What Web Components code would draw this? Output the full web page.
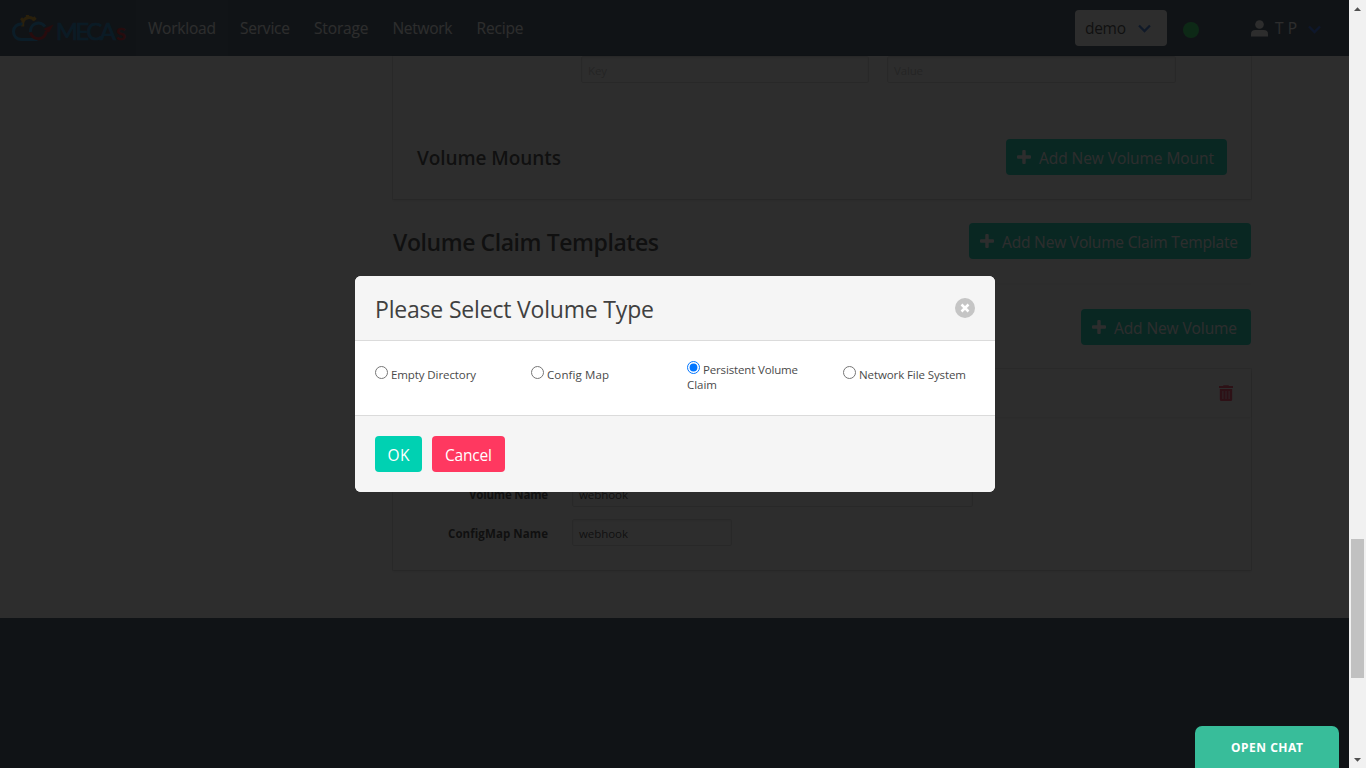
<!DOCTYPE html>
<html lang="en">
<head>
<meta charset="utf-8">
<title>Volumes</title>
<style>
html,body{margin:0;height:100%;overflow:hidden}
body{font-family:"Open Sans","Noto Sans",sans-serif;font-size:15.5px;color:#4a4a4a;background:#34495e}
</style>
</head>
<body>
<app-shell></app-shell>
<script>
const define=(name,html,setup)=>customElements.define(name,class extends HTMLElement{
  connectedCallback(){
    if(this.shadowRoot)return;
    const t=document.createElement('template');
    t.innerHTML=html;
    this.attachShadow({mode:'open'}).append(t.content.cloneNode(true));
    if(setup)setup(this,this.shadowRoot);
  }
});

/* One line of text, tracked so that it fills the width given in "w". */
define('fit-text',`<style>:host{display:inline-block;white-space:nowrap;line-height:inherit}</style><slot></slot>`,(el)=>{
  const track=()=>{
    const n=el.textContent.length,w=+el.getAttribute('w');
    el.style.letterSpacing='0px';
    const cur=el.getBoundingClientRect().width;
    if(!cur||!w)return;
    const s=(w-cur)/Math.max(1,n-1);
    el.style.letterSpacing=s+'px';
    el.style.marginRight=-s+'px';
  };
  requestAnimationFrame(track);
});

define('app-logo',`<style>:host{display:flex;align-items:center;box-sizing:border-box;width:136px;height:56px;padding-left:11px}svg{display:block;flex:none}
.name{font:400 23.5px/28px Lato,sans-serif;color:#0d7ec8;margin:6px 0 0 1px;-webkit-text-stroke:.7px #0d7ec8}
.s{font:400 23px/28px Lato,sans-serif;color:#d01420;margin:6px 0 0 0;-webkit-text-stroke:.7px #d01420}</style>
<svg width="44" height="56" viewBox="11 0 44 56" fill="none">
<path d="M22.700 26.500V23a6.500 6.500 0 0 1 11.800-2.500" stroke="#e8a010" stroke-width="3"/>
<path d="M21.200 20.500l2-2M27.500 17v-2M33.500 19.500l2-2" stroke="#e8a010" stroke-width="3.200"/>
<path d="M22.500 24c-5.500-.5-9 3.300-9 7.500 0 5 3.500 8 8 8h16" stroke="#1490d8" stroke-width="3"/>
<path d="M30.500 32a8 8 0 0 1 14.500-5.500" stroke="#1490d8" stroke-width="3"/>
<path d="M30.500 32.500a8 8 0 0 0 15.800-1.500" stroke="#d01420" stroke-width="3"/>
<path d="M43.500 29l10-4.500-4.500 8z" fill="#d01420"/>
</svg><fit-text class="name" w="60">MECA</fit-text><fit-text class="s" w="9">s</fit-text>`);

define('chevron-icon',`<style>:host{display:block;line-height:0}</style><svg width="13" height="9" viewBox="0 0 13 9" fill="none" stroke="currentColor" stroke-width="2.300"><path d="M1 1.500l5.500 5.500L12 1.500"/></svg>`);

define('nav-link',`<style>:host{display:flex;align-items:center;padding:0 12px;color:#fff;height:56px}:host([active]){background:#3b5065}</style><slot></slot>`);

define('top-nav',`<style>
:host{display:flex;height:56px;background:#34495e;color:#fff;align-items:center;flex:none}
.end{margin-left:auto;display:flex;align-items:center;height:56px}
.select{display:flex;box-sizing:border-box;width:92px;height:36px;background:#fff;border-radius:4px;align-items:center;justify-content:space-between;padding:0 16px 0 10px;color:#363636}
.select chevron-icon{color:#3273dc}
.dot{width:16px;height:16px;border-radius:50%;background:#22e05e;margin:4px 52px 0 16px}
.tp{margin-left:7px}
.end>.user-chevron{display:block;margin:3px 28px 0 11px;color:#2464f0;flex:none}
</style>
<app-logo></app-logo>
<nav-link active><fit-text w="68">Workload</fit-text></nav-link>
<nav-link><fit-text w="50">Service</fit-text></nav-link>
<nav-link><fit-text w="54.500">Storage</fit-text></nav-link>
<nav-link><fit-text w="60">Network</fit-text></nav-link>
<nav-link><fit-text w="47">Recipe</fit-text></nav-link>
<div class="end"><div class="select"><fit-text w="41">demo</fit-text><chevron-icon></chevron-icon></div>
<div class="dot"></div>
<svg width="17" height="17" viewBox="0 0 17 17" fill="#fff"><circle cx="8.500" cy="4.500" r="4.300"/><path d="M0 16.500v-2.300Q0 10 4.500 10h8q4.500 0 4.500 4.200v2.300z"/></svg>
<fit-text class="tp" w="22">T P</fit-text><chevron-icon class="user-chevron"></chevron-icon></div>`);

define('add-button',`<style>:host{display:flex;box-sizing:border-box;height:36px;align-items:center;gap:8px;padding:0 0 0 11px;background:#00d1b2;color:#fff;border-radius:4px;flex:none}svg{display:block}::slotted(*){padding-top:2px}</style>
<svg width="14" height="14" fill="#fff"><path d="M5.300 1q0-1 1-1h1.400q1 0 1 1v4.300H13q1 0 1 1v1.400q0 1-1 1H8.700V13q0 1-1 1H6.300q-1 0-1-1V8.700H1q-1 0-1-1V6.300q0-1 1-1h4.300z"/></svg><slot></slot>`);

define('text-field',`<style>:host{display:flex;box-sizing:border-box;height:27px;align-items:center;padding:2px 6px 0;border:1px solid #dbdbdb;border-radius:2px;font-size:11.500px;color:#363636;box-shadow:inset 0 1px 2px rgba(10,10,10,.1)}:host([hint]){color:#c0c0c0}</style><slot></slot>`);

define('form-row',`<style>:host{display:flex;align-items:center;height:27px}.l{width:131px;text-align:right;margin-right:24px;padding-top:2px;font-weight:700;font-size:11.500px;color:#363636;display:flex;justify-content:flex-end}</style><div class="l"><slot name="label"></slot></div><slot></slot>`);

define('panel-card',`<style>:host{display:block;box-sizing:border-box;background:#fff;box-shadow:0 2px 3px rgba(10,10,10,.1),0 0 0 1px rgba(10,10,10,.1);padding:0 24px 24px}</style><slot></slot>`);

define('page-content',`<style>
:host{display:block;box-sizing:border-box;height:562px;background:#fff;padding:0 98px 0 393px;flex:none}
.row{display:flex;align-items:center;justify-content:space-between;color:#363636}
.fields{display:grid;grid-template-columns:288px 289px;gap:18px;padding-left:164px;margin-bottom:56px}
.row>.h4{font-size:19px;font-weight:600;padding-top:2px}.row>.h3{font-size:23px;font-weight:600;padding-top:2px}
.row{height:36px}
.b{width:221px}.c{width:282px}.d{width:170px}
hr{border:0;height:2px;background:#f5f5f5;margin:24px 0}
.vol{height:201px;margin-top:24px;padding:0}
.head{height:48px;display:flex;align-items:center;justify-content:flex-end;padding-right:17px;box-shadow:0 1px 2px rgba(10,10,10,.1);margin-bottom:63px}
form-row+form-row{margin-top:12px}
</style>
<panel-card>
<div class="fields"><text-field hint><fit-text w="19">Key</fit-text></text-field><text-field hint><fit-text w="29">Value</fit-text></text-field></div>
<div class="row"><fit-text class="h4" w="144">Volume Mounts</fit-text><add-button class="b"><fit-text w="175">Add New Volume Mount</fit-text></add-button></div>
</panel-card>
<div class="row" style="margin-top:24px"><fit-text class="h3" w="266">Volume Claim Templates</fit-text><add-button class="c"><fit-text w="236">Add New Volume Claim Template</fit-text></add-button></div>
<hr>
<div class="row" style="justify-content:flex-end"><add-button class="d"><fit-text w="123">Add New Volume</fit-text></add-button></div>
<panel-card class="vol">
<div class="head"><svg width="16" height="18" viewBox="0 0 16 18"><path fill="#ff3860" d="M5.500 1.200h5l.5.800h4v2H1V2h4zM1.800 5h12.400v10.500q0 1.500-1.500 1.500H3.300q-1.500 0-1.500-1.500z"/><path stroke="#fff" stroke-opacity=".75" d="M4.900 7v8M8 7v8M11.100 7v8"/></svg></div>
<form-row style="margin-left:24px"><fit-text slot="label" w="79">Volume Name</fit-text><text-field style="width:401px"><fit-text w="49">webhook</fit-text></text-field></form-row>
<form-row style="margin-left:24px"><fit-text slot="label" w="100">ConfigMap Name</fit-text><text-field style="width:160px"><fit-text w="49">webhook</fit-text></text-field></form-row>
</panel-card>`);

define('radio-option',`<style>:host{display:block;flex:none;width:156px;box-sizing:border-box;padding-bottom:4px;font-size:11.500px;line-height:15px;color:#4a4a4a}:host([checked]){padding-bottom:0}label{display:block}input{width:13px;height:13px;margin:0 3px 0 0;vertical-align:0}</style><label><input type="radio"><slot></slot></label>`,(el,r)=>{r.querySelector('input').checked=el.hasAttribute('checked')});

define('modal-button',`<style>:host{display:flex;align-items:center;justify-content:center;height:36px;border-radius:4px;background:#00d1b2;color:#fff}:host([danger]){background:#ff3860}::slotted(*){padding-top:2px}</style><slot></slot>`);

define('modal-card',`<style>
:host{display:block;width:640px;border-radius:6px;overflow:hidden;background:#fff}
header{height:64px;background:#f5f5f5;border-bottom:1px solid #dbdbdb;display:flex;align-items:center;justify-content:space-between;padding:0 20px;font-size:23px;color:#404040}
header svg{display:block}
header fit-text{padding-top:1px}
main{height:74px;display:flex;align-items:center;padding:0 0 4px 20px;box-sizing:border-box}
footer{height:76px;background:#f5f5f5;border-top:1px solid #dbdbdb;display:flex;align-items:center;gap:10px;padding:0 20px}
</style>
<header><fit-text w="279">Please Select Volume Type</fit-text><svg width="20" height="20"><circle cx="10" cy="10" r="10" fill="#c5c5c5"/><path d="M6.500 6.500l7 7M13.500 6.500l-7 7" stroke="#fff" stroke-width="2.500"/></svg></header>
<main><radio-option><fit-text w="85">Empty Directory</fit-text></radio-option><radio-option><fit-text w="62">Config Map</fit-text></radio-option><radio-option checked><fit-text w="95">Persistent Volume</fit-text><br><fit-text w="30">Claim</fit-text></radio-option><radio-option><fit-text w="107">Network File System</fit-text></radio-option></main>
<footer><modal-button style="width:47px"><fit-text w="22">OK</fit-text></modal-button><modal-button danger style="width:73px"><fit-text w="47">Cancel</fit-text></modal-button></footer>`);

define('chat-tab',`<style>:host{display:flex;align-items:center;justify-content:center;width:144px;height:42px;border-radius:7px 7px 0 0;background:#38bd9a;color:#fff;font:700 12px "Noto Sans",sans-serif}</style><fit-text w="72">OPEN CHAT</fit-text>`);

define('scroll-rail',`<style>:host{display:flex;flex-direction:column;align-items:center;width:17px;height:768px;background:#f1f1f1;flex:none}i{display:block;width:13px;height:139px;background:#c1c1c1;margin-top:522px}svg{display:block}.dn{margin-top:auto}</style>
<svg width="17" height="17"><path fill="#505050" d="M5 11h7L8.500 7.300z"/></svg><i></i><svg class="dn" width="17" height="17"><path fill="#505050" d="M5 7h7l-3.500 3.700z"/></svg>`);

define('app-shell',`<style>
:host{display:flex;width:1366px;height:768px;overflow:hidden}
.view{position:relative;width:1349px;height:768px;display:flex;flex-direction:column;background:#34495e}
.shade{position:absolute;inset:0;background:rgba(10,10,10,.86);display:flex;align-items:center;justify-content:center;padding-left:1px}
chat-tab{position:absolute;right:10px;bottom:0}
</style>
<div class="view"><top-nav></top-nav><page-content></page-content><div class="shade"><modal-card></modal-card></div><chat-tab></chat-tab></div><scroll-rail></scroll-rail>`);
</script>
</body>
</html>
